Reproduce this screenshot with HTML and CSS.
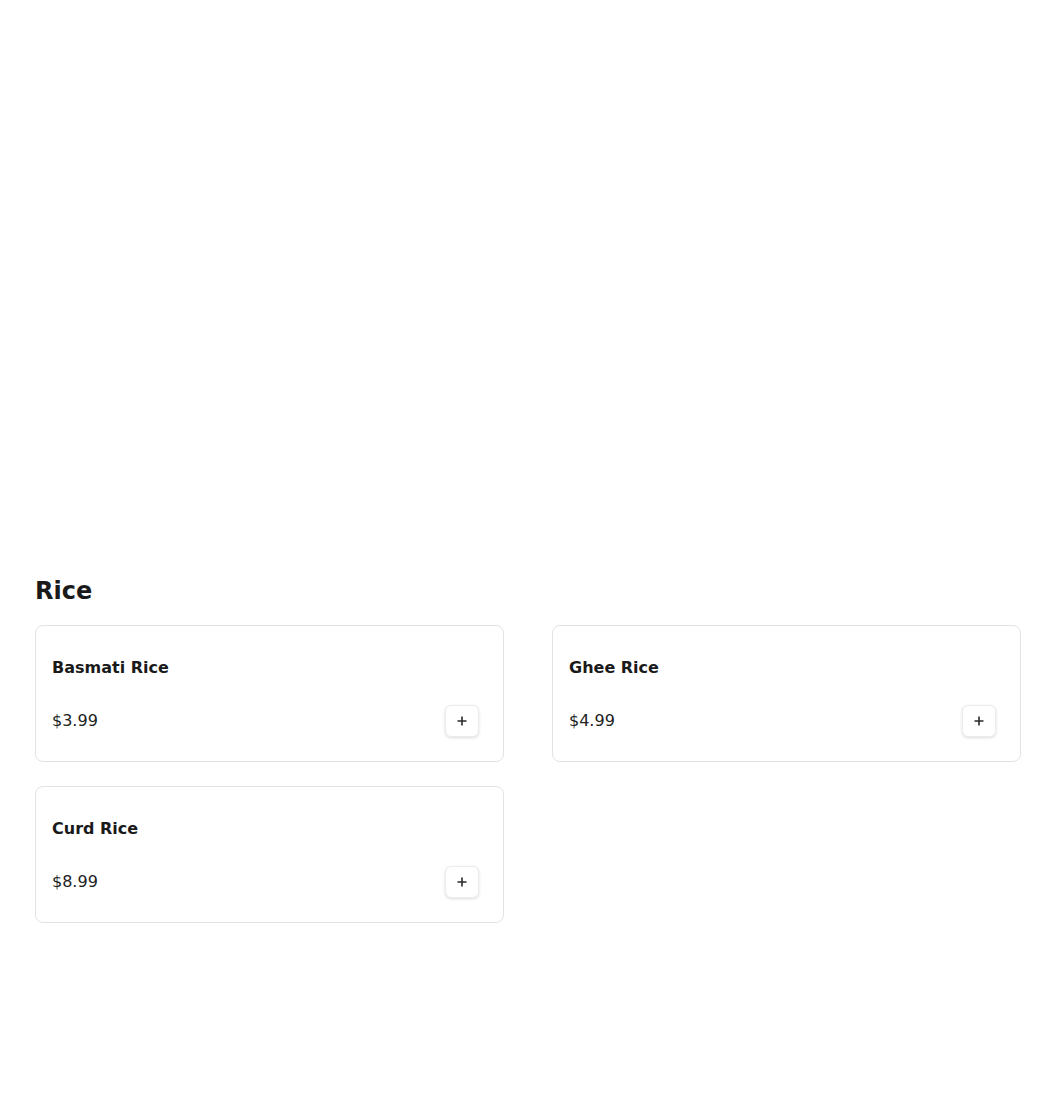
FILE: index.html
```html
<!DOCTYPE html>
<html>
<head>
<meta charset="utf-8">
<link rel="stylesheet" href="styles.css">
</head>
<body>
<div class="hero"></div>
<section class="menu">
  <h2 class="category">Rice</h2>
  <div class="grid">
    <div class="card">
      <h3 class="name">Basmati Rice</h3>
      <div class="row">
        <span class="price">$3.99</span>
        <button class="add" aria-label="Add"><svg width="10" height="10" viewBox="0 0 10 10"><path d="M5 0.5v9M0.5 5h9" stroke="#2a2a2a" stroke-width="1.6" fill="none"/></svg></button>
      </div>
    </div>
    <div class="card">
      <h3 class="name">Ghee Rice</h3>
      <div class="row">
        <span class="price">$4.99</span>
        <button class="add" aria-label="Add"><svg width="10" height="10" viewBox="0 0 10 10"><path d="M5 0.5v9M0.5 5h9" stroke="#2a2a2a" stroke-width="1.6" fill="none"/></svg></button>
      </div>
    </div>
    <div class="card">
      <h3 class="name">Curd Rice</h3>
      <div class="row">
        <span class="price">$8.99</span>
        <button class="add" aria-label="Add"><svg width="10" height="10" viewBox="0 0 10 10"><path d="M5 0.5v9M0.5 5h9" stroke="#2a2a2a" stroke-width="1.6" fill="none"/></svg></button>
      </div>
    </div>
  </div>
</section>
</body>
</html>
```
FILE: styles.css
```css
html, body {
  margin: 0;
  padding: 0;
  background: #fff;
  font-family: "DejaVu Sans", sans-serif;
  color: #1a1a1a;
}
.hero {
  height: 575px;
}
.menu {
  padding: 0 29px 0 35px;
}
.category {
  margin: 0 0 18px;
  font-size: 24px;
  line-height: 32px;
  font-weight: bold;
}
.grid {
  display: grid;
  grid-template-columns: 1fr 1fr;
  column-gap: 48px;
  row-gap: 24px;
}
.card {
  border: 1px solid #e3e3e3;
  border-radius: 8px;
  padding: 16px;
  background: #fff;
}
.name {
  margin: 14px 0 0;
  font-size: 16px;
  line-height: 24px;
  font-weight: bold;
}
.row {
  display: flex;
  align-items: center;
  justify-content: space-between;
  margin-top: 25px;
  margin-bottom: 8px;
  padding-right: 8px;
}
.price {
  font-size: 16px;
  line-height: 24px;
  color: #222;
}
.add {
  width: 34px;
  height: 32px;
  border: 1px solid #ececec;
  border-radius: 6px;
  background: #fff;
  box-shadow: 0 1px 3px rgba(0,0,0,0.14);
  padding: 0;
  display: flex;
  align-items: center;
  justify-content: center;
}
```
